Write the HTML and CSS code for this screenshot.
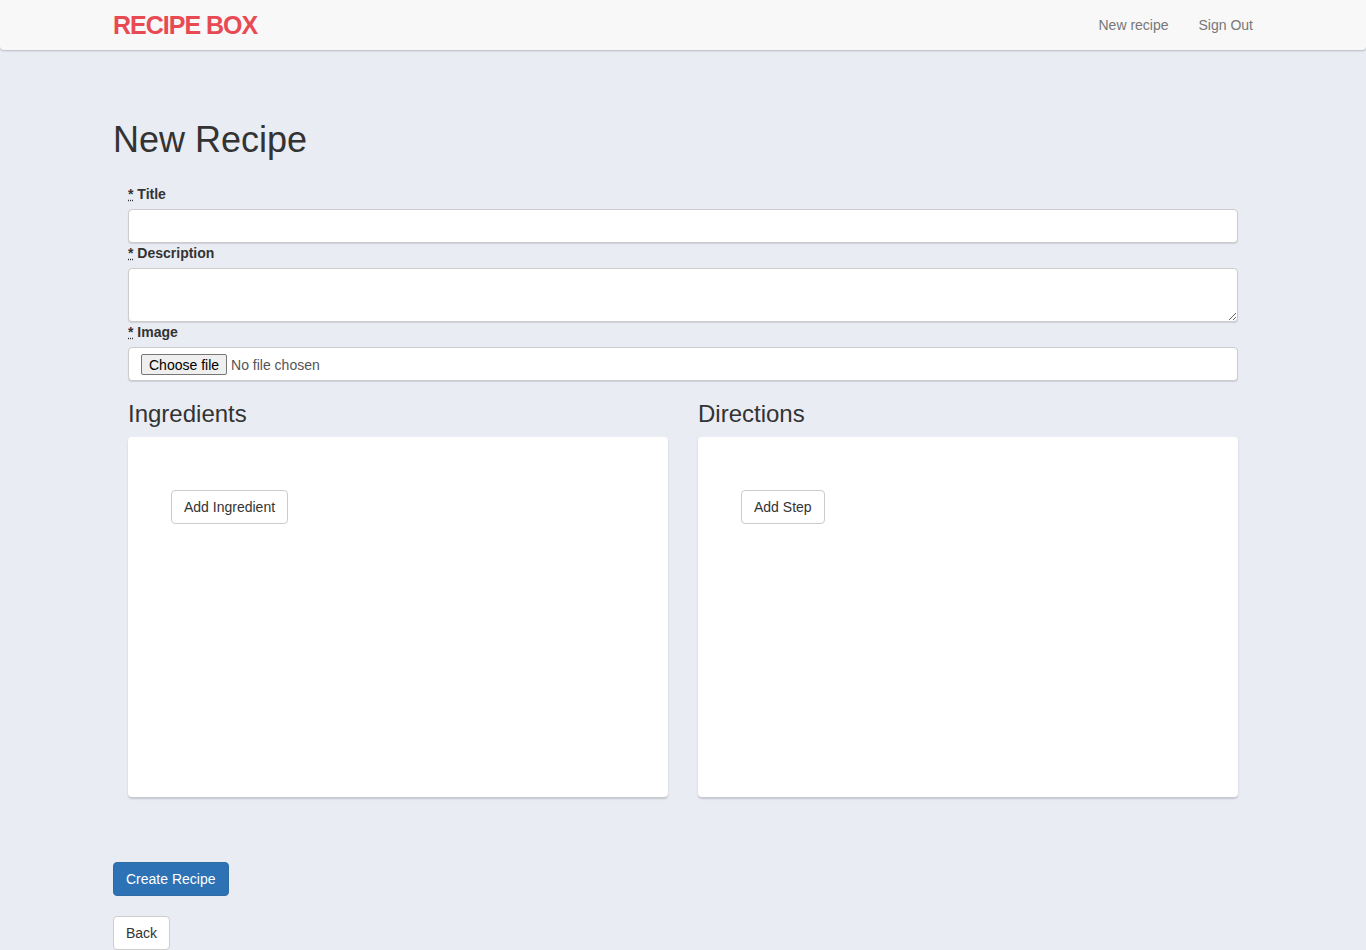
FILE: index.html
```html
<!DOCTYPE html>
<html lang="en">
<head>
<meta charset="utf-8">
<title>Recipe Box</title>
<link rel="stylesheet" href="styles.css">
</head>
<body>
<nav class="navbar">
  <div class="container nav-inner">
    <a class="brand" href="#">RECIPE BOX</a>
    <ul class="nav-links">
      <li><a href="#">New recipe</a></li>
      <li><a href="#">Sign Out</a></li>
    </ul>
  </div>
</nav>
<main class="container page">
  <h1 class="page-title">New Recipe</h1>
  <form class="recipe-form">
    <div class="fields">
      <label class="field-label" for="title"><abbr title="required">*</abbr> Title</label>
      <input class="form-control" id="title" type="text">
      <label class="field-label" for="desc"><abbr title="required">*</abbr> Description</label>
      <textarea class="form-control textarea" id="desc"></textarea>
      <label class="field-label" for="image"><abbr title="required">*</abbr> Image</label>
      <label class="form-control file" for="image">
        <input class="file-hidden" id="image" type="file">
        <span class="file-btn">Choose file</span>
        <span class="file-name">No file chosen</span>
      </label>
      <div class="cols">
        <section class="col">
          <h3 class="col-title">Ingredients</h3>
          <div class="panel">
            <button type="button" class="btn btn-default">Add Ingredient</button>
          </div>
        </section>
        <section class="col">
          <h3 class="col-title">Directions</h3>
          <div class="panel">
            <button type="button" class="btn btn-default">Add Step</button>
          </div>
        </section>
      </div>
    </div>
    <div class="actions">
      <button type="submit" class="btn btn-primary">Create Recipe</button>
      <a class="btn btn-default" href="#">Back</a>
    </div>
  </form>
</main>
</body>
</html>
```
FILE: styles.css
```css
* { box-sizing: border-box; }
html, body { margin: 0; padding: 0; }
body {
  background: #e9ecf3;
  font-family: "Liberation Sans", Arial, sans-serif;
  font-size: 14px;
  line-height: 20px;
  color: #333;
}
a { text-decoration: none; }
.container {
  width: 1170px;
  margin: 0 auto;
  padding: 0 15px;
}
.navbar {
  height: 50px;
  background: #f8f8f8;
  border-radius: 0 0 4px 4px;
  box-shadow: 0 1px 2px rgba(0,0,0,0.22);
}
.nav-inner {
  display: flex;
  justify-content: space-between;
  align-items: center;
  height: 50px;
}
.brand {
  font-size: 25px;
  font-weight: bold;
  letter-spacing: -1px;
  color: #e84a54;
  line-height: 50px;
}
.nav-links {
  list-style: none;
  margin: 0 -15px 0 0;
  padding: 0;
  display: flex;
}
.nav-links a {
  display: block;
  padding: 15px;
  line-height: 20px;
  color: #777;
}
.page { padding-top: 50px; padding-bottom: 40px; }
.page-title {
  font-size: 36px;
  font-weight: 500;
  line-height: 40px;
  margin: 20px 0 24px;
  color: #333;
}
.fields { padding: 0 15px; }
.field-label {
  display: block;
  font-weight: bold;
  margin-bottom: 5px;
}
abbr[title] {
  text-decoration: underline dotted;
  cursor: help;
}
.form-control {
  display: block;
  width: 100%;
  height: 34px;
  padding: 6px 12px;
  font-family: "Liberation Sans", Arial, sans-serif;
  font-size: 14px;
  line-height: 20px;
  color: #555;
  background: #fff;
  border: 1px solid #ccc;
  border-radius: 4px;
  box-shadow: 0 1px 1px rgba(0,0,0,0.12);
}
.textarea { height: 54px; resize: vertical; }
.file {
  display: flex;
  align-items: center;
  gap: 4px;
  padding: 1px 12px 0;
  cursor: pointer;
}
.file-hidden {
  position: absolute;
  width: 1px;
  height: 1px;
  opacity: 0;
  overflow: hidden;
}
.file-btn {
  display: inline-block;
  height: 21px;
  padding: 0 7px;
  line-height: 21px;
  overflow: hidden;
  color: #000;
  background: #efefef;
  border: 1px solid #767676;
  border-radius: 2px;
}
.file-name { color: #555; }
.cols {
  display: grid;
  grid-template-columns: 1fr 1fr;
  column-gap: 30px;
}
.col-title {
  font-size: 24px;
  font-weight: 500;
  line-height: 26px;
  margin: 20px 0 10px;
  color: #333;
}
.panel {
  height: 360px;
  background: #fff;
  border-radius: 4px;
  box-shadow: 0 2px 2px rgba(0,0,0,0.16);
  padding: 53px 43px;
}
.btn {
  display: inline-block;
  height: 34px;
  padding: 6px 12px;
  font-family: "Liberation Sans", Arial, sans-serif;
  font-size: 14px;
  line-height: 20px;
  border: 1px solid #ccc;
  border-radius: 4px;
  cursor: pointer;
}
.btn-default { background: #fff; color: #333; }
.btn-primary { background: #2d72b5; border-color: #2e6da4; color: #fff; }
.actions {
  display: flex;
  flex-direction: column;
  align-items: flex-start;
  gap: 20px;
  margin-top: 65px;
}
```
